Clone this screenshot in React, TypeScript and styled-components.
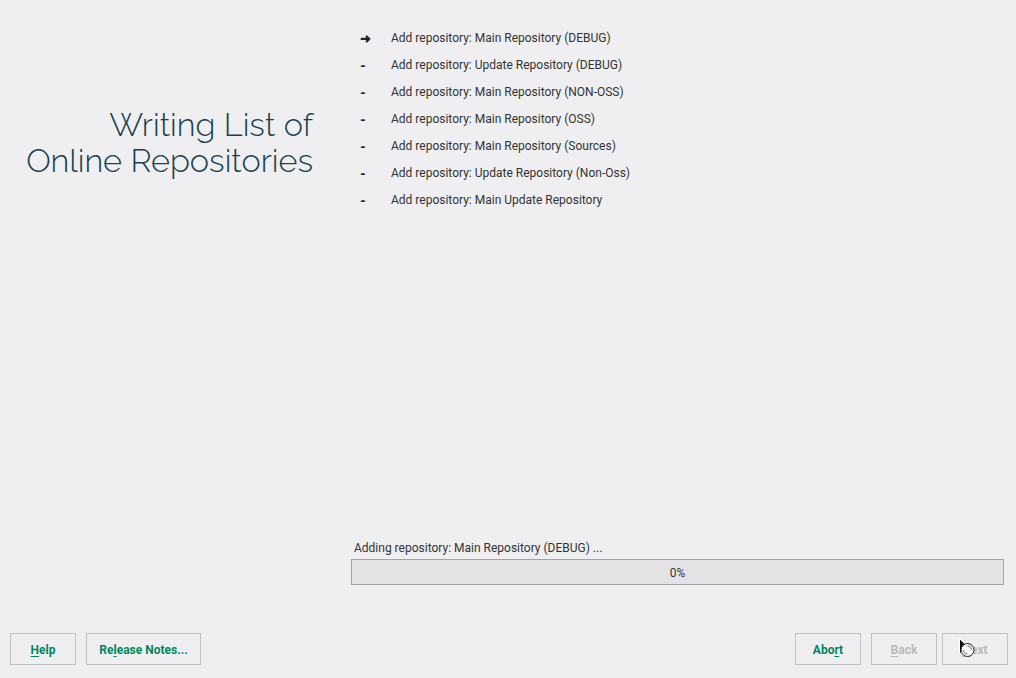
import React from "react";
import styled, { createGlobalStyle } from "styled-components";

const GlobalStyle = createGlobalStyle`
  html, body {
    margin: 0;
    padding: 0;
    background: #efeff1;
  }
  body {
    font-family: Roboto, "Liberation Sans", sans-serif;
    font-size: 12px;
    color: #333;
  }
`;

const Window = styled.div`
  width: 1016px;
  height: 678px;
  display: flex;
  flex-direction: column;
  background: #efeff1;
  overflow: hidden;
`;

const Main = styled.div`
  flex: 1;
  display: flex;
  min-height: 0;
`;

const Side = styled.div`
  width: 313px;
  flex-shrink: 0;
  padding-top: 107px;
  padding-right: 38px;
`;

const Title = styled.h1`
  margin: 0;
  font-family: Raleway, Lato, "Open Sans", sans-serif;
  font-weight: 300;
  font-size: 32.5px;
  line-height: 36px;
  color: #173f4f;
  text-align: right;
`;

const Content = styled.div`
  flex: 1;
  display: flex;
  flex-direction: column;
  justify-content: space-between;
  padding: 25px 12px 48px 0;
`;

const StepList = styled.ul`
  list-style: none;
  margin: 0;
  padding: 0 0 0 9px;
`;

const Step = styled.li`
  display: flex;
  align-items: center;
  height: 27px;
  line-height: 27px;
`;

const Marker = styled.span<{ $current?: boolean }>`
  width: 31px;
  flex-shrink: 0;
  font-weight: 900;
  font-size: 13px;
  color: #222;
`;

const StepText = styled.span`
  color: #333;
`;

const Status = styled.div`
  display: flex;
  flex-direction: column;
  gap: 3px;
`;

const StatusLabel = styled.div`
  padding-left: 3px;
  line-height: 16px;
  color: #333;
`;

const ProgressBar = styled.div`
  height: 24px;
  padding-top: 1px;
  box-sizing: border-box;
  height: 26px;
  border: 1px solid #a4a4a6;
  background: #e3e3e5;
  display: flex;
  align-items: center;
  justify-content: center;
  color: #333;
`;

const Footer = styled.div`
  display: flex;
  align-items: center;
  justify-content: space-between;
  padding: 0 8px 13px 10px;
`;

const ButtonGroup = styled.div<{ $gap?: number }>`
  display: flex;
  gap: ${(p) => p.$gap ?? 10}px;
  position: relative;
`;

const Button = styled.button<{ $width?: number }>`
  width: ${(p) => p.$width ?? 66}px;
  height: 32px;
  padding: 2px 0 0;
  background: transparent;
  border: 1px solid #c1c1c3;
  border-radius: 0;
  font-family: Roboto, "Liberation Sans", sans-serif;
  font-size: 12px;
  font-weight: bold;
  color: #00875f;
  cursor: pointer;

  &:disabled {
    color: #b9b9bb;
    cursor: default;
  }

  u {
    text-decoration: underline;
    text-underline-offset: 2px;
  }
`;

const NextWrap = styled.div`
  display: flex;
  gap: 5px;
  position: relative;
`;

const Cursor = styled.svg`
  position: absolute;
  left: 87px;
  top: 4px;
  pointer-events: none;
`;

const steps = [
  "Add repository: Main Repository (DEBUG)",
  "Add repository: Update Repository (DEBUG)",
  "Add repository: Main Repository (NON-OSS)",
  "Add repository: Main Repository (OSS)",
  "Add repository: Main Repository (Sources)",
  "Add repository: Update Repository (Non-Oss)",
  "Add repository: Main Update Repository",
];

const App: React.FC = () => {
  return (
    <Window>
      <GlobalStyle />
      <Main>
        <Side>
          <Title>
            Writing List of
            <br />
            Online Repositories
          </Title>
        </Side>
        <Content>
          <StepList>
            {steps.map((s, i) => (
              <Step key={s}>
                <Marker $current={i === 0}>{i === 0 ? "➜" : "-"}</Marker>
                <StepText>{s}</StepText>
              </Step>
            ))}
          </StepList>
          <Status>
            <StatusLabel>Adding repository: Main Repository (DEBUG) ...</StatusLabel>
            <ProgressBar>0%</ProgressBar>
          </Status>
        </Content>
      </Main>
      <Footer>
        <ButtonGroup>
          <Button>
            <u>H</u>elp
          </Button>
          <Button $width={115}>
            Re<u>l</u>ease Notes...
          </Button>
        </ButtonGroup>
        <ButtonGroup>
          <Button>
            Abo<u>r</u>t
          </Button>
          <NextWrap>
            <Button disabled>
              <u>B</u>ack
            </Button>
            <Button disabled>
              <u>N</u>ext
            </Button>
            <Cursor width="22" height="24" viewBox="0 0 22 24">
              <path
                d="M1.5 1.5 L1.5 17 L5 13.5 L8 20 L10.5 19 L7.6 12.6 L12.5 12.6 Z"
                fill="#111"
                stroke="#fff"
                strokeWidth="1"
                strokeLinejoin="round"
              />
              <circle cx="9.5" cy="13" r="6.5" fill="#fafafa" stroke="#222" strokeWidth="1" />
              <path d="M9.5 9 A4 4 0 0 1 13.5 13" fill="none" stroke="#9a9a9a" strokeWidth="1.5" />
              <path d="M5.5 13 A4 4 0 0 0 9.5 17" fill="none" stroke="#9a9a9a" strokeWidth="1.5" />
            </Cursor>
          </NextWrap>
        </ButtonGroup>
      </Footer>
    </Window>
  );
};

export default App;
